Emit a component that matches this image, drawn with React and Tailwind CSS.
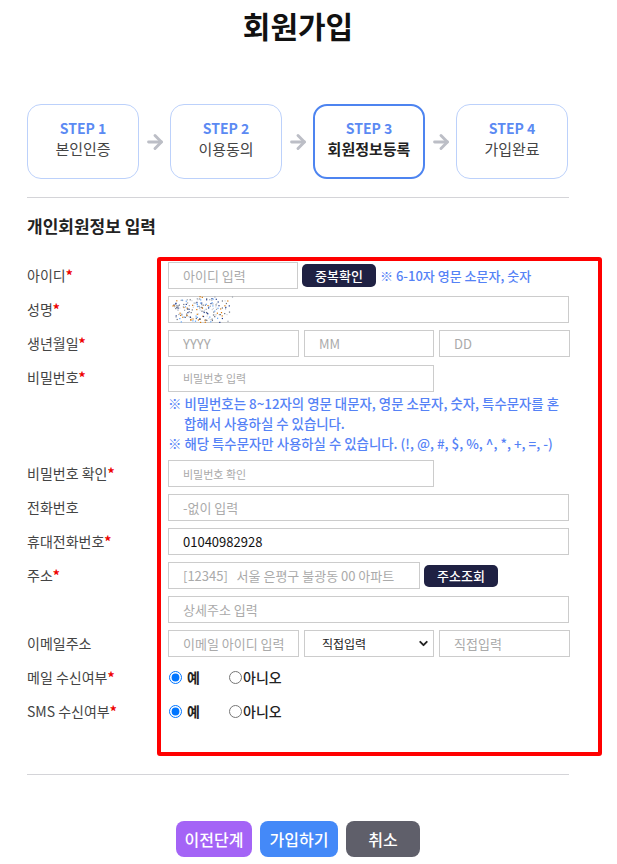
import { ArrowRight, ChevronDown } from "lucide-react";

const font = { fontFamily: '"Noto Sans CJK KR", "Noto Sans", sans-serif' };

const steps = [
  { no: "STEP 1", name: "본인인증" },
  { no: "STEP 2", name: "이용동의" },
  { no: "STEP 3", name: "회원정보등록", active: true },
  { no: "STEP 4", name: "가입완료" },
];

// blurred name placeholder - pixel noise
const NoiseBlock = () => {
  const dots = [];
  let seed = 7;
  const rand = () => {
    seed = (seed * 9301 + 49297) % 233280;
    return seed / 233280;
  };
  const colors = ["#6b7280", "#9ca3af", "#1e3a8a", "#d97706", "#60a5fa", "#d1d5db"];
  for (let i = 0; i < 220; i++) {
    const x = rand() * 60;
    const y = rand() * 26;
    const d = Math.hypot((x - 28) / 30, (y - 13) / 13);
    if (d > 1 && rand() > 0.2) continue;
    dots.push(
      <rect key={i} x={x.toFixed(1)} y={y.toFixed(1)} width="1.2" height="1.2" fill={colors[Math.floor(rand() * colors.length)]} />
    );
  }
  return (
    <svg width="62" height="28" viewBox="0 0 62 28">
      {dots}
    </svg>
  );
};

const Label = ({ children, req }) => (
  <div className="w-[141px] shrink-0 h-[27px] flex items-center text-[14px] text-[#444]">
    {children}
    {req && <span className="text-[#e00] font-bold">*</span>}
  </div>
);

const Input = ({ w = "w-full", placeholder, value, small }) => (
  <input
    readOnly
    placeholder={placeholder}
    defaultValue={value}
    className={`${w} h-[27px] border border-[#ccc] pl-[14px] ${small ? "text-[11px]" : "text-[13px]"} text-[#111] placeholder:text-[#aaa] outline-none bg-white`}
    style={font}
  />
);

const Row = ({ label, req, children }) => (
  <div className="flex items-start">
    <Label req={req}>{label}</Label>
    <div className="flex-1">{children}</div>
  </div>
);

const Radio = ({ name }) => (
  <div className="flex items-center h-[27px] text-[14px] text-[#222]">
    <label className="flex items-center w-[60px]">
      <input type="radio" name={name} defaultChecked className="w-[13px] h-[13px] m-0 mr-[5px] ml-[1px]" />
      <span className="font-bold">예</span>
    </label>
    <label className="flex items-center ml-[1px]">
      <input type="radio" name={name} className="w-[13px] h-[13px] m-0 mr-[1px]" />
      <span className="font-medium">아니오</span>
    </label>
  </div>
);

export default function App() {
  return (
    <div className="relative min-h-[864px] bg-white" style={font}>
      <div className="w-[542px] ml-[27px]">
        <h1 className="h-[50px] flex items-center justify-center text-[30px] font-bold text-[#111]">회원가입</h1>

        {/* Steps */}
        <div className="mt-[54px] flex items-center">
          {steps.map((s, i) => (
            <div key={s.no} className="flex items-center">
              {i > 0 && (
                <div className="w-[31px] flex justify-center">
                  <ArrowRight size={22} strokeWidth={3.2} color="#bcbec6" />
                </div>
              )}
              <div
                className={`w-[112px] h-[75px] rounded-[14px] flex flex-col items-center justify-center pb-[6px] bg-white ${
                  s.active ? "border-2 border-[#4d84f0]" : "border border-[#bcd1fb]"
                }`}
              >
                <div className="text-[14px] font-bold text-[#5b8af3] leading-[20px]">{s.no}</div>
                <div className={`text-[15px] leading-[22px] ${s.active ? "font-bold text-[#222]" : "text-[#444]"}`}>{s.name}</div>
              </div>
            </div>
          ))}
        </div>

        <div className="mt-[18px] border-t border-[#d4d4d8]" />

        <h2 className="mt-[12px] h-[32px] flex items-center text-[17px] font-bold text-[#222]">개인회원정보 입력</h2>

        {/* Form */}
        <div className="mt-[20px] flex flex-col gap-[7px]">
          <Row label="아이디" req>
            <div className="flex items-center">
              <Input w="w-[130px]" placeholder="아이디 입력" />
              <button className="ml-[4px] h-[23px] w-[74px] rounded-[5px] bg-[#1f2143] text-white text-[13px] font-medium">중복확인</button>
              <span className="ml-[4px] text-[13px] font-medium text-[#5582f6] whitespace-nowrap">※ 6-10자 영문 소문자, 숫자</span>
            </div>
          </Row>
          <Row label="성명" req>
            <div className="relative h-[27px] border border-[#ccc] bg-white">
              <div className="absolute left-[3px] top-[-1px]">
                <NoiseBlock />
              </div>
            </div>
          </Row>
          <Row label="생년월일" req>
            <div className="flex gap-[5px]">
              <Input w="w-[131px]" placeholder="YYYY" />
              <Input w="w-[130px]" placeholder="MM" />
              <Input w="w-[131px]" placeholder="DD" />
            </div>
          </Row>
          <Row label="비밀번호" req>
            <Input w="w-[266px]" placeholder="비밀번호 입력" small />
            <div className="text-[13.4px] font-medium text-[#5582f6] leading-[20px] mt-[1px] whitespace-nowrap">
              <div>※ 비밀번호는 8~12자의 영문 대문자, 영문 소문자, 숫자, 특수문자를 혼</div>
              <div className="pl-[16px]">합해서 사용하실 수 있습니다.</div>
              <div>※ 해당 특수문자만 사용하실 수 있습니다. (!, @, #, $, %, ^, *, +, =, -)</div>
            </div>
          </Row>
          <Row label="비밀번호 확인" req>
            <Input w="w-[266px]" placeholder="비밀번호 확인" small />
          </Row>
          <Row label="전화번호">
            <Input placeholder="-없이 입력" />
          </Row>
          <Row label="휴대전화번호" req>
            <Input value="01040982928" />
          </Row>
          <Row label="주소" req>
            <div className="flex items-center">
              <Input w="w-[252px]" placeholder={"[12345]\u00a0\u00a0 서울 은평구 불광동 00 아파트"} />
              <button className="ml-[4px] h-[22px] w-[74px] rounded-[5px] bg-[#1f2143] text-white text-[13px] font-medium">주소조회</button>
            </div>
          </Row>
          <Row label="">
            <Input placeholder="상세주소 입력" />
          </Row>
          <Row label="이메일주소">
            <div className="flex gap-[5px]">
              <Input w="w-[131px]" placeholder="이메일 아이디 입력" />
              <div className="relative w-[130px] h-[27px] border border-[#ccc] bg-white flex items-center pl-[17px] text-[12px] text-[#222]">
                직접입력
                <ChevronDown size={13} strokeWidth={3.5} className="absolute right-[3px] top-[6px] text-[#222]" />
              </div>
              <Input w="w-[131px]" placeholder="직접입력" />
            </div>
          </Row>
          <Row label="메일 수신여부" req>
            <Radio name="mail" />
          </Row>
          <Row label="SMS 수신여부" req>
            <Radio name="sms" />
          </Row>
        </div>

        <div className="mt-[49px] border-t border-[#d4d4d8]" />

        <div className="mt-[46px] flex justify-center gap-[8px]">
          <button className="w-[76px] h-[36px] rounded-[8px] bg-[#a464f6] text-white text-[16px] font-medium">이전단계</button>
          <button className="w-[78px] h-[36px] rounded-[8px] bg-[#4489f8] text-white text-[16px] font-medium">가입하기</button>
          <button className="w-[74px] h-[36px] rounded-[8px] bg-[#5f5f6a] text-white text-[16px] font-medium">취소</button>
        </div>
      </div>

      {/* annotation box */}
      <div className="absolute left-[157px] top-[257px] w-[445px] h-[499px] border-4 border-[#ff0000] rounded-[3px] pointer-events-none" />
    </div>
  );
}
